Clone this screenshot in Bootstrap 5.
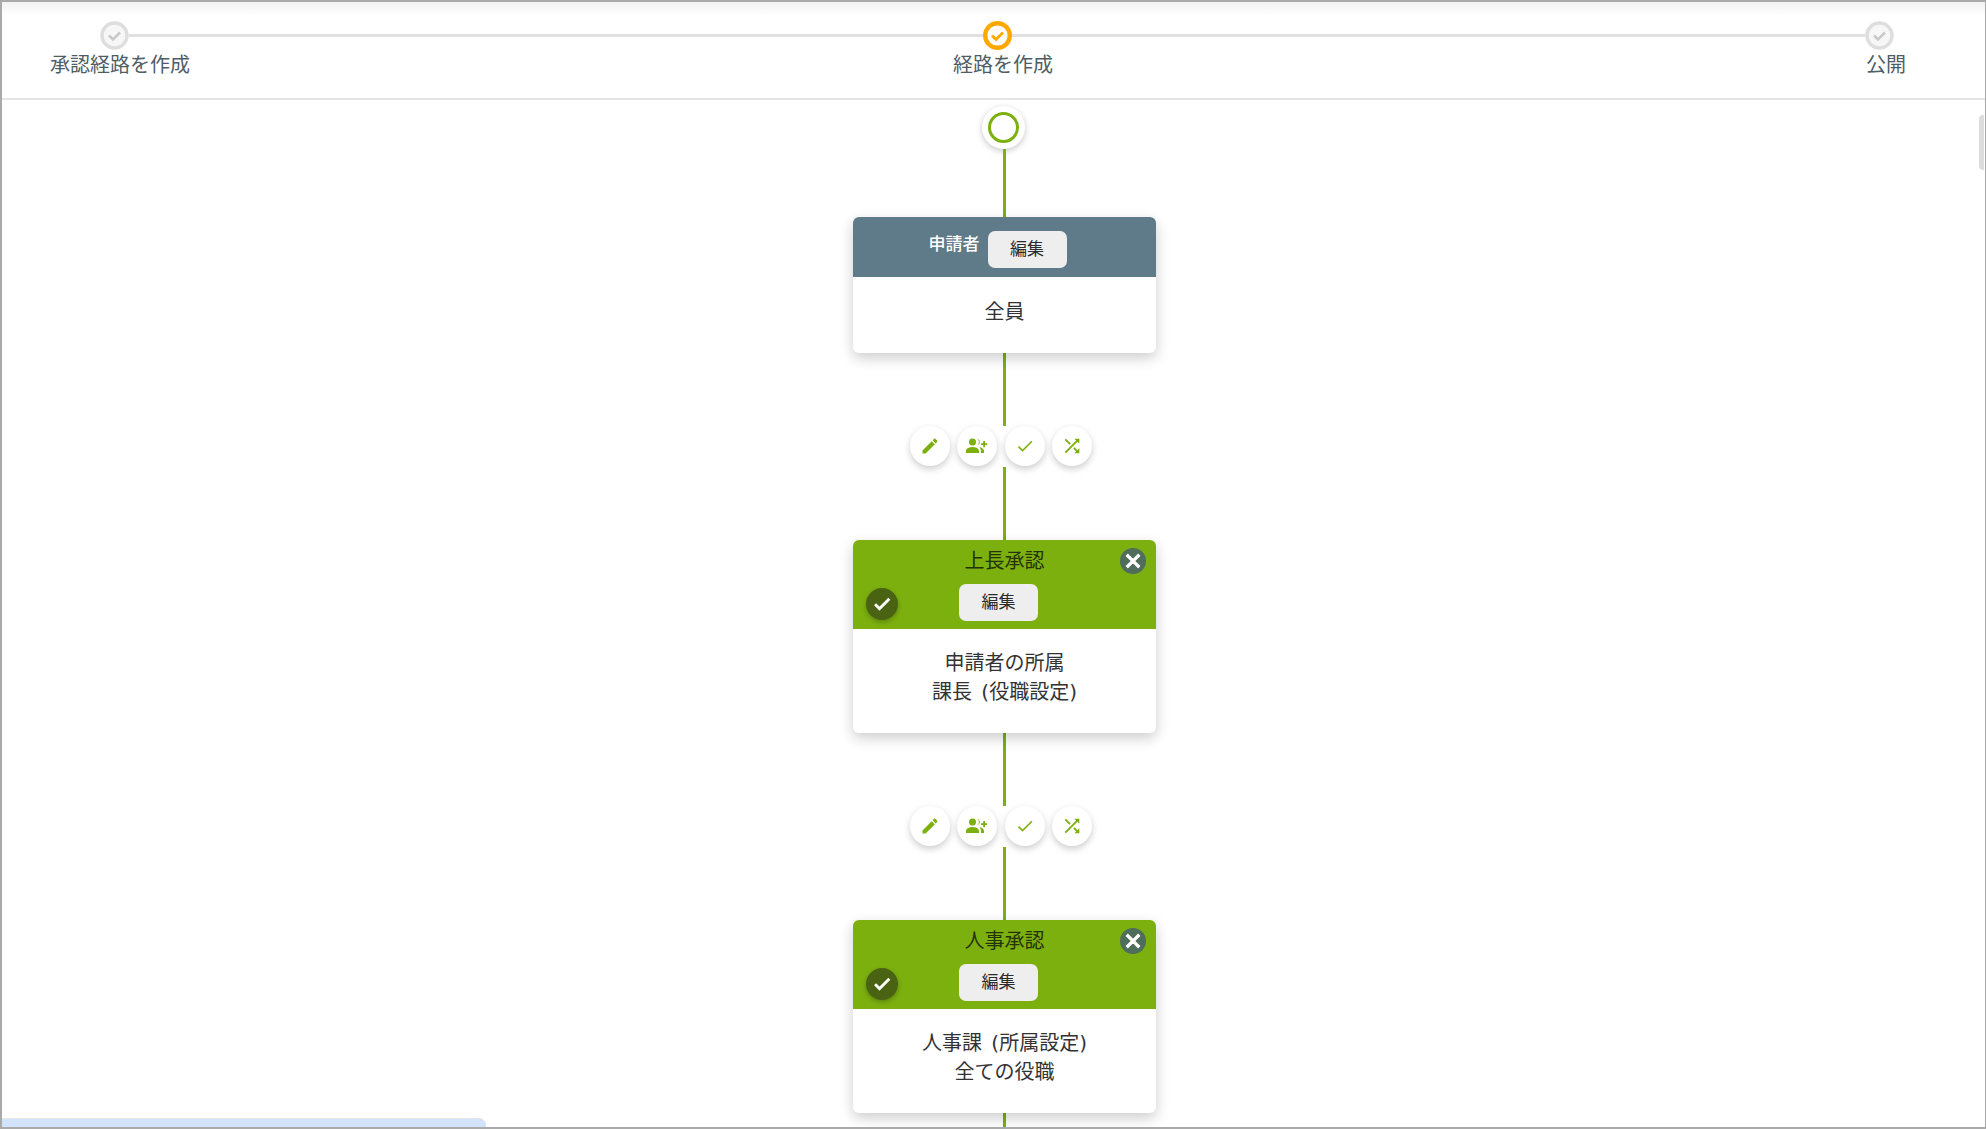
<!DOCTYPE html>
<html lang="ja">
<head>
  <meta charset="UTF-8">
  <title>経路を作成</title>
  <link href="https://cdn.jsdelivr.net/npm/bootstrap@5.3.0/dist/css/bootstrap.min.css" rel="stylesheet">
  <style>
    html, body { height: 100%; overflow: hidden; background: #fff; }
    body { font-family: "DejaVu Sans", "Noto Sans CJK JP", sans-serif; color: #333; font-size: 20px; word-spacing: 3px; }

    .frame { height: 1129px; border: 2px solid #aaa; border-right-width: 1px; overflow: hidden; position: relative; }

    /* stepper */
    .stepper { height: 98px; border-bottom: 2px solid #e4e4e4; background: linear-gradient(#f2f2f2, #fff 14px); padding-top: 19px; }
    .stepper-track { padding-left: 98px; padding-right: 91px; height: 29px; }
    .stepper-bar { height: 3px; background: #e0e0e0; }
    .step-icon { width: 29px; height: 29px; flex: none; display: block; }
    .step-off { color: #dedede; }
    .step-off .step-check { stroke: #c9c9c9; }
    .step-off .step-disc { fill: #f7f7f7; }
    .step-on { color: #ffa800; }
    .stepper-labels { padding-left: 48px; margin-top: 0; font-size: 20px; line-height: 30px; color: #4e5d66; }
    .label-mid { margin-left: 763px; }
    .label-end { margin-left: 813px; }

    /* flow */
    .flow { padding-left: 22px; }
    .flow-start { width: 43px; height: 43px; margin-top: 6px; margin-right: 2px; border-radius: 50%; background: #fff; box-shadow: 0 2px 6px rgba(0,0,0,.22); }
    .flow-start span { width: 31px; height: 31px; border: 3px solid #7cb00f; border-radius: 50%; display: block; }
    .flow-line { width: 3px; background: #7cb00f; height: 73px; }
    .flow-line-first { height: 68px; }
    .flow-line-last { height: 20px; }

    .flow-card { width: 303px; border: 0; border-radius: 6px; box-shadow: 0 5px 14px rgba(0,0,0,.2); overflow: visible; }
    .flow-card .card-header { border: 0; border-radius: 6px 6px 0 0; padding: 0; position: relative; }
    .flow-card .card-body { padding: 0; text-align: center; font-size: 20px; line-height: 29px; color: #333; }

    .head-slate { background: #5f7a88; height: 60px; padding-right: 14px !important; padding-top: 5px !important; }
    .head-slate .head-name { color: #fff; font-size: 17px; font-weight: 500; margin-top: -9px; }
    .body-short { height: 76px; padding-bottom: 5px !important; }

    .head-green { background: #7cb00f; height: 89px; padding-top: 7px !important; }
    .head-green .head-name { color: #26330a; font-size: 20px; line-height: 28px; }
    .head-green .edit-btn { margin: 9px 12px 0 0; }
    .body-tall { height: 104px; padding-top: 20px !important; }

    .edit-btn { width: 79px; height: 37px; padding: 0; border: 0; border-radius: 7px; background: #eee; color: #2b2b2b; font-size: 17px; line-height: 37px; }
    .edit-btn:hover { background: #e2e2e2; color: #2b2b2b; }

    .card-close, .card-done { position: absolute; border-radius: 50%; display: flex; align-items: center; justify-content: center; stroke: currentColor; }
    .card-close { top: 8px; right: 10px; width: 26px; height: 26px; background: #4f6d5b; stroke-width: 1.6; }
    .card-done { left: 13px; top: 48px; width: 32px; height: 32px; background: #4a6312; box-shadow: 0 2px 5px rgba(0,0,0,.25); stroke-width: 1.4; }

    .flow-tools { height: 41px; gap: 7.6px; margin-right: 7px; }
    .tool-btn { width: 40px; height: 40px; padding: 0; border: 0; border-radius: 50%; background: #fff; color: #7cb00f; box-shadow: 0 3px 7px rgba(0,0,0,.2); display: flex; align-items: center; justify-content: center; }

    /* leftovers at the edges of the window */
    .scroll-thumb { position: absolute; right: 1px; top: 113px; width: 5px; height: 55px; background: #dcdcdc; border-radius: 4px 0 0 4px; }
    .bottom-tab { position: absolute; left: 0; bottom: 0; width: 484px; height: 9px; background: #d2e3fc; border-top: 1px solid #e6e6e6; border-radius: 0 7px 0 0; }
  </style>
</head>
<body>
  <svg class="d-none">
    <symbol id="i-pencil" viewBox="0 0 24 24"><path fill="currentColor" d="M20.71,7.04C21.1,6.65 21.1,6 20.71,5.63L18.37,3.29C18,2.9 17.35,2.9 16.96,3.29L15.12,5.12L18.87,8.87M3,17.25V21H6.75L17.81,9.93L14.06,6.18L3,17.25Z"/></symbol>
    <symbol id="i-people" viewBox="0 0 24 24"><path fill="currentColor" d="M1 19V17S1 13 7.500 13 14 17 14 17V19ZM4 8A3.500 3.500 0 1 0 11 8A3.500 3.500 0 0 0 4 8M14.500 13.300A5.600 5.600 0 0 1 16 17V19H19V17S19 13.800 14.500 13.300M12.500 4.700A5 5 0 0 1 12.500 11.300A3.500 3.500 0 0 0 12.500 4.700M20 7H18.200V9.200H16V11H18.200V13.200H20V11H22.200V9.200H20Z"/></symbol>
    <symbol id="i-check" viewBox="0 0 24 24"><path fill="currentColor" d="M21,7L9,19L3.5,13.5L4.91,12.09L9,16.17L19.59,5.59L21,7Z"/></symbol>
    <symbol id="i-shuffle" viewBox="0 0 24 24"><path fill="currentColor" d="M14.83,13.41L13.42,14.82L16.55,17.95L14.5,20H20V14.5L17.96,16.54L14.83,13.41M14.5,4L16.54,6.04L4,18.59L5.41,20L17.96,7.46L20,9.5V4M10.59,9.17L5.41,4L4,5.41L9.17,10.58L10.59,9.17Z"/></symbol>
    <symbol id="i-close" viewBox="0 0 24 24"><path fill="currentColor" d="M19,6.41L17.59,5L12,10.59L6.41,5L5,6.41L10.59,12L5,17.59L6.41,19L12,13.41L17.59,19L19,17.59L13.41,12L19,6.41Z"/></symbol>
  </svg>

  <div class="frame">
    <div class="stepper">
      <div class="stepper-track d-flex align-items-center">
        <svg class="step-icon step-off" viewBox="0 0 29 29"><circle class="step-disc" cx="14.500" cy="14.500" r="12.500" fill="#fff" stroke="currentColor" stroke-width="3.500"/><path class="step-check" d="M9 14.500l4 4 7-7" fill="none" stroke="currentColor" stroke-width="2.600"/></svg>
        <div class="stepper-bar flex-grow-1"></div>
        <svg class="step-icon step-on" viewBox="0 0 29 29"><circle cx="14.500" cy="14.500" r="12.300" fill="#fff" stroke="currentColor" stroke-width="4.400"/><path d="M9 14.500l4 4 7-7" fill="none" stroke="currentColor" stroke-width="2.800"/></svg>
        <div class="stepper-bar flex-grow-1"></div>
        <svg class="step-icon step-off" viewBox="0 0 29 29"><circle class="step-disc" cx="14.500" cy="14.500" r="12.500" fill="#fff" stroke="currentColor" stroke-width="3.500"/><path class="step-check" d="M9 14.500l4 4 7-7" fill="none" stroke="currentColor" stroke-width="2.600"/></svg>
      </div>
      <div class="stepper-labels d-flex">
        <span>承認経路を作成</span>
        <span class="label-mid">経路を作成</span>
        <span class="label-end">公開</span>
      </div>
    </div>

    <div class="flow d-flex flex-column align-items-center">
      <div class="flow-start d-flex align-items-center justify-content-center"><span></span></div>
      <div class="flow-line flow-line-first"></div>

      <div class="card flow-card">
        <div class="card-header head-slate d-flex align-items-center justify-content-center gap-2">
          <span class="head-name">申請者</span>
          <button class="btn edit-btn">編集</button>
        </div>
        <div class="card-body body-short d-flex align-items-center justify-content-center">全員</div>
      </div>

      <div class="flow-line"></div>
      <div class="flow-tools d-flex">
        <button class="tool-btn"><svg width="20" height="20"><use href="#i-pencil"/></svg></button>
        <button class="tool-btn"><svg width="24" height="24"><use href="#i-people"/></svg></button>
        <button class="tool-btn"><svg width="20" height="20"><use href="#i-check"/></svg></button>
        <button class="tool-btn"><svg width="22" height="22"><use href="#i-shuffle"/></svg></button>
      </div>
      <div class="flow-line"></div>

      <div class="card flow-card">
        <div class="card-header head-green text-center">
          <div class="head-name">上長承認</div>
          <button class="btn edit-btn">編集</button>
          <span class="card-close text-white"><svg width="22" height="22"><use href="#i-close"/></svg></span>
          <span class="card-done text-white"><svg width="20" height="20"><use href="#i-check"/></svg></span>
        </div>
        <div class="card-body body-tall">申請者の所属<br>課長 (役職設定)</div>
      </div>

      <div class="flow-line"></div>
      <div class="flow-tools d-flex">
        <button class="tool-btn"><svg width="20" height="20"><use href="#i-pencil"/></svg></button>
        <button class="tool-btn"><svg width="24" height="24"><use href="#i-people"/></svg></button>
        <button class="tool-btn"><svg width="20" height="20"><use href="#i-check"/></svg></button>
        <button class="tool-btn"><svg width="22" height="22"><use href="#i-shuffle"/></svg></button>
      </div>
      <div class="flow-line"></div>

      <div class="card flow-card">
        <div class="card-header head-green text-center">
          <div class="head-name">人事承認</div>
          <button class="btn edit-btn">編集</button>
          <span class="card-close text-white"><svg width="22" height="22"><use href="#i-close"/></svg></span>
          <span class="card-done text-white"><svg width="20" height="20"><use href="#i-check"/></svg></span>
        </div>
        <div class="card-body body-tall">人事課 (所属設定)<br>全ての役職</div>
      </div>
      <div class="flow-line flow-line-last"></div>
    </div>

    <div class="scroll-thumb"></div>
    <div class="bottom-tab"></div>
  </div>

  <script src="https://cdn.jsdelivr.net/npm/bootstrap@5.3.0/dist/js/bootstrap.bundle.min.js"></script>
</body>
</html>
